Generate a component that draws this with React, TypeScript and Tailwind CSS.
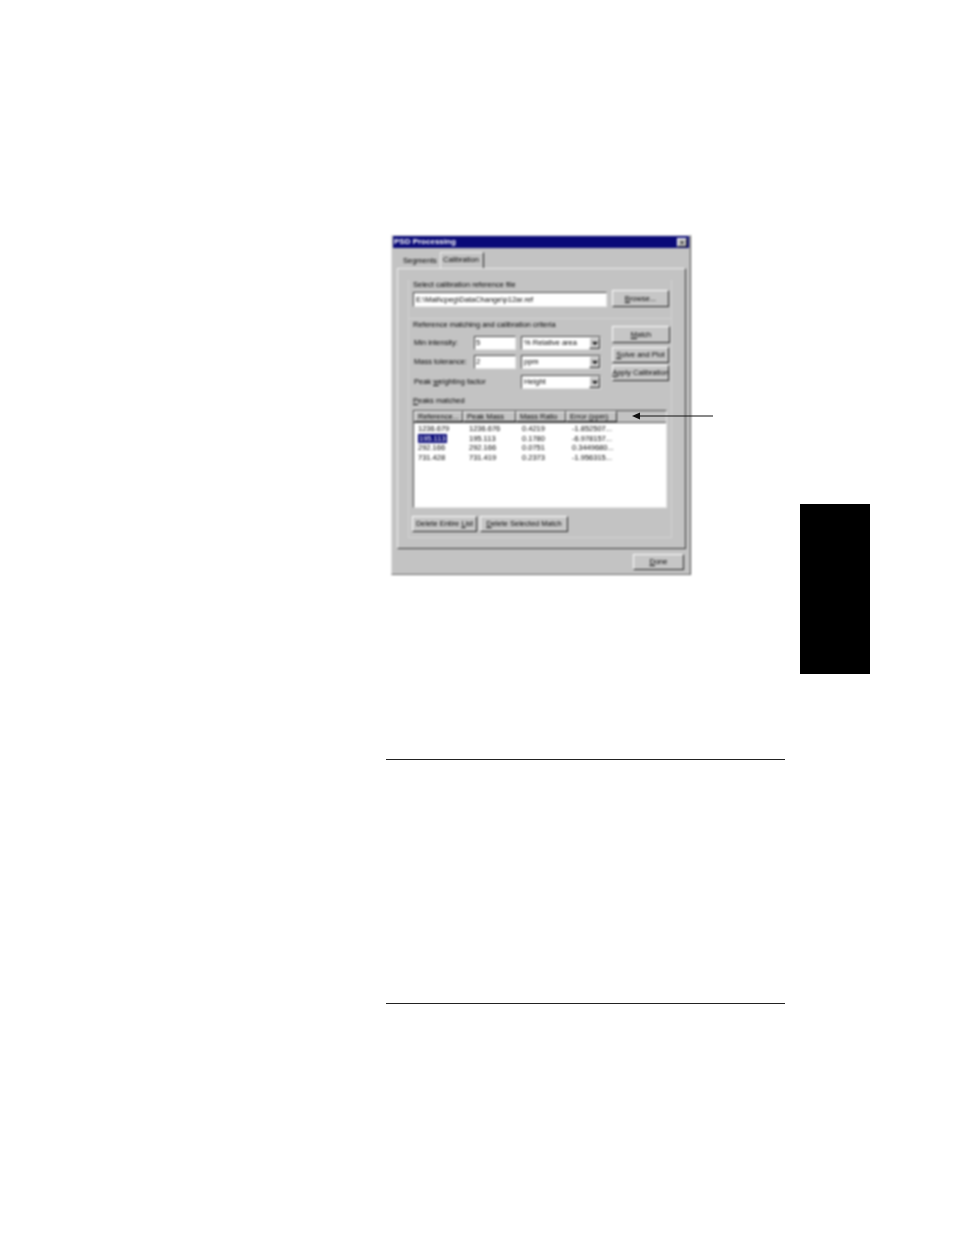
import React from "react";

const raised = "border border-t-[#ffffff] border-l-[#ffffff] border-r-[#222] border-b-[#222]";
const sunken = "border border-t-[#444] border-l-[#444] border-r-[#e8e8e8] border-b-[#e8e8e8]";

function Btn({ w, h, mt, children }: { w: string; h: string; mt?: string; children: React.ReactNode }) {
  return (
    <div className={`${w} ${h} ${mt ?? ""} ${raised} shrink-0 flex items-center justify-center bg-[#c6c6c6] whitespace-nowrap`}>
      <span>{children}</span>
    </div>
  );
}

function Select({ label }: { label: string }) {
  return (
    <div className={`w-[80px] h-[14px] ${sunken} bg-white flex items-center justify-between pl-[2px]`}>
      <span>{label}</span>
      <div className={`w-[11px] h-[12px] ${raised} bg-[#c6c6c6] flex items-center justify-center`}>
        <div className="w-0 h-0 border-l-[3px] border-r-[3px] border-t-[3px] border-l-transparent border-r-transparent border-t-black" />
      </div>
    </div>
  );
}

function Row({ label, value, select, mt }: { label: React.ReactNode; value?: string; select: string; mt: string }) {
  return (
    <div className={`flex items-center h-[14px] ${mt}`}>
      <div className="w-[61px] pl-[1px] whitespace-nowrap">{label}</div>
      {value ? (
        <div className={`w-[42px] h-[14px] ${sunken} bg-white pl-[1px] flex items-center mr-[5px]`}>{value}</div>
      ) : (
        <div className="w-[47px]" />
      )}
      <Select label={select} />
    </div>
  );
}

const rows = [
  ["1236.679", "1236.676", "0.4219", "-1.852507..."],
  ["195.113", "195.113", "0.1780", "-6.978157..."],
  ["292.166", "292.166", "0.0751", "0.3449680..."],
  ["731.428", "731.419", "0.2373", "-1.956315..."],
];

const heads: [string, string][] = [
  ["Reference...", "w-[49px]"],
  ["Peak Mass", "w-[53px]"],
  ["Mass Ratio", "w-[50px]"],
  ["Error (ppm)", "w-[51px]"],
];

function Dialog() {
  return (
    <div className="relative w-[300px] h-[340px] ml-[391px] bg-[#c3c3c3] border border-t-[#e0e0e0] border-l-[#e0e0e0] border-r-[#444] border-b-[#666] flex flex-col text-[7.5px] leading-[10px] text-black blur-[0.8px] font-['Liberation_Sans',Arial,sans-serif]">
      <div className="h-[12px] mx-[1px] bg-[#0a0a78] flex items-center justify-between pl-[1px] pr-[2px] text-[8px] text-white font-bold">
        <span>PSD Processing</span>
        <div className={`w-[10px] h-[9px] bg-[#c6c6c6] ${raised} flex items-center justify-center text-black text-[7px] leading-none`}>×</div>
      </div>
      <div className="flex h-[20px] items-end pl-[6px]">
        <div className="w-[42px] h-[16px] pt-[4px] pl-[5px] whitespace-nowrap">Segments</div>
        <div className="w-[44px] h-[16px] pl-[2px] pt-[2px] border-t border-l border-t-[#eee] border-l-[#eee] border-r border-r-[#222] whitespace-nowrap">Calibration</div>
      </div>
      <div className="w-[289px] h-[281px] ml-[5px] border border-t-[#eee] border-l-[#eee] border-r-[#333] border-b-[#333] pl-[10px] pt-[11px] shrink-0">
        <div className="w-[264px] pl-[4px] pb-[11px] border-x border-b border-[#d2d2d2]">
          <div className="whitespace-nowrap">Select calibration reference file</div>
          <div className="flex items-start gap-[5px]">
            <div className={`mt-[2px] w-[194px] h-[15px] bg-white ${sunken} flex items-center pl-[2px] whitespace-nowrap`}>E:\Mali\cpeg\DataChange\p12ar.ref</div>
            <Btn w="w-[57px]" h="h-[17px]"><span className="underline">B</span>rowse...</Btn>
          </div>
        </div>
        <div className="w-[264px] pl-[4px] pt-[1px] pb-[5px] border-x border-b border-[#d2d2d2]">
          <div className="flex items-start gap-[11px]">
            <div className="w-[188px]">
              <div className="whitespace-nowrap">Reference matching and calibration criteria</div>
              <Row mt="mt-[6px]" label="Min intensity:" value="5" select="% Relative area" />
              <Row mt="mt-[5px]" label="Mass tolerance:" value="2" select="ppm" />
              <Row mt="mt-[6px]" label={<span>Peak <span className="underline">w</span>eighting factor</span>} select="Height" />
            </div>
            <div className="flex flex-col mt-[6px]">
              <Btn w="w-[58px]" h="h-[17px]"><span className="underline">M</span>atch</Btn>
              <Btn w="w-[57px]" h="h-[16px]" mt="mt-[4px]"><span className="underline">S</span>olve and Plot</Btn>
              <Btn w="w-[57px]" h="h-[16px]" mt="mt-[2px]"><span className="underline">A</span>pply Calibration</Btn>
            </div>
          </div>
          <div className="mt-[7px] whitespace-nowrap"><span className="underline">P</span>eaks matched</div>
          <div className={`mt-[4px] w-[254px] h-[98px] bg-white ${sunken}`}>
            <div className="flex h-[12px] bg-[#c3c3c3] border-b border-b-[#444]">
              {heads.map(([t, w]) => (
                <div key={t} className={`${w} ${raised} pl-[3px] flex items-center whitespace-nowrap overflow-hidden`}>{t}</div>
              ))}
            </div>
            <div className="pt-[1px]">
              {rows.map((r, i) => (
                <div key={r[0]} className="flex h-[9.6px] items-center whitespace-nowrap leading-[9px]">
                  <div className="w-[49px] pl-[4px]">
                    <span className={i === 1 ? "bg-[#0a0a78] text-white px-[1px]" : ""}>{r[0]}</span>
                  </div>
                  <div className="w-[53px] pl-[6px]">{r[1]}</div>
                  <div className="w-[50px] pl-[6px]">{r[2]}</div>
                  <div className="w-[51px] pl-[6px]">{r[3]}</div>
                </div>
              ))}
            </div>
          </div>
          <div className="flex mt-[8px] gap-[3px] -ml-[1px]">
            <Btn w="w-[65px]" h="h-[16px]">Delete Entire <span className="underline">L</span>ist</Btn>
            <Btn w="w-[88px]" h="h-[16px]"><span className="underline">D</span>elete Selected Match</Btn>
          </div>
        </div>
      </div>
      <div className="flex justify-end mt-[5px] pr-[6px]">
        <Btn w="w-[51px]" h="h-[16px]"><span className="underline">D</span>one</Btn>
      </div>
    </div>
  );
}

export default function App() {
  return (
    <div className="relative w-[954px] h-[1235px] bg-white overflow-hidden flex">
      <div className="w-[800px] shrink-0 pt-[235px]">
        <Dialog />
        <div className="mt-[184px] ml-[386px] w-[399px] h-px bg-[#222]" />
        <div className="mt-[243px] ml-[386px] w-[399px] h-px bg-[#222]" />
      </div>
      <div className="pt-[504px]">
        <div className="w-[70px] h-[170px] bg-black" />
      </div>
      <svg className="absolute left-[628px] top-[410px]" width="90" height="12" viewBox="0 0 90 12">
        <line x1="8" y1="6" x2="85" y2="6" stroke="#111" strokeWidth="1" />
        <polygon points="4,6 12,2.5 12,9.5" fill="#111" />
      </svg>
    </div>
  );
}
